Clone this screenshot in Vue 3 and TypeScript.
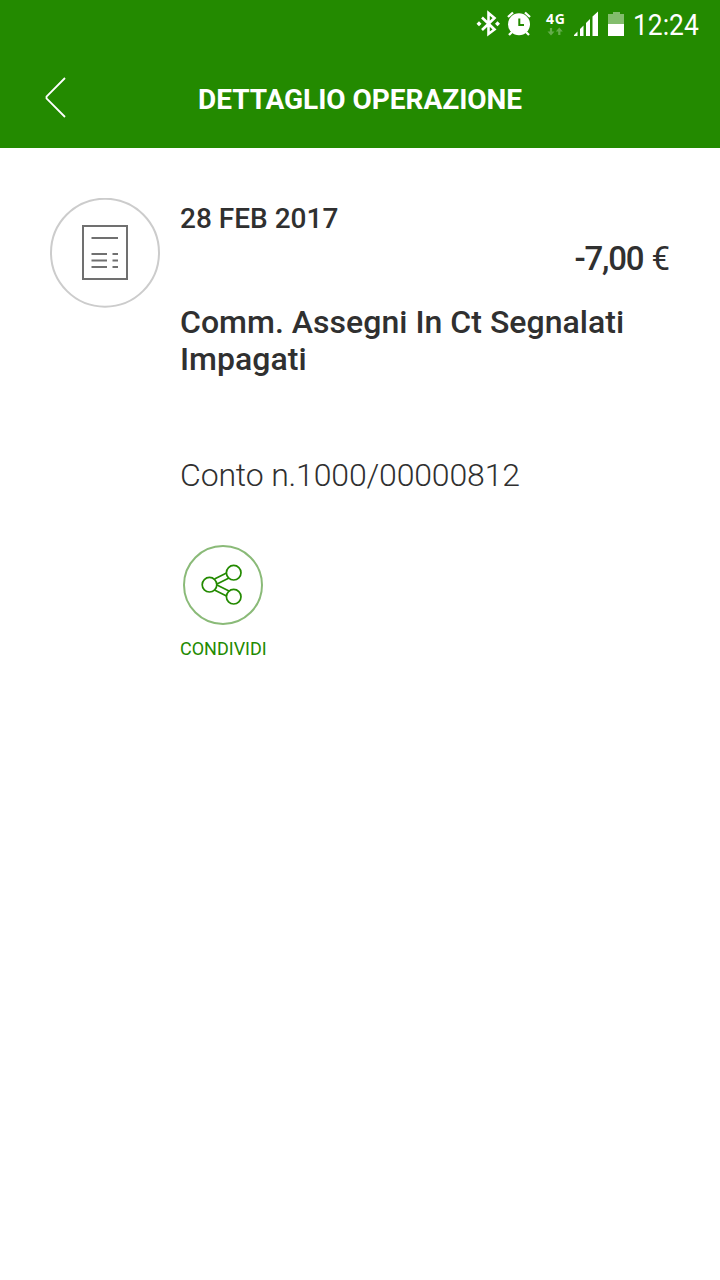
<script setup lang="ts">
const time = '12:24'
const operation = {
  date: '28 FEB 2017',
  amount: '-7,00',
  currency: '€',
  description: ['Comm. Assegni In Ct Segnalati', 'Impagati'],
  account: 'Conto n.1000/00000812',
}
</script>

<template>
  <div class="screen">
    <header class="top">
      <div class="status">
        <svg class="status-icons" width="160" height="50" viewBox="470 0 160 50" fill="none">
          <path d="M482 17.500 494.500 29.500 488.500 34V13l6 5-12.500 12" stroke="#fff" stroke-width="2.600" />
          <path d="m476.500 23.700 2.500-2.500 2.500 2.500-2.500 2.500zM495 23.700l2.500-2.500 2.500 2.500-2.500 2.500z" fill="#fff" />
          <circle cx="519" cy="24.300" r="11" fill="#fff" />
          <path d="m508 17 5-4.500M530 17l-5-4.500M512 32l-3 3M526 32l3 3" stroke="#fff" stroke-width="2.300" />
          <path d="M519.300 18.500V25H524" stroke="#238a00" stroke-width="2" />
          <path d="M551 28v6M559.300 35v-6" stroke="#65ad4c" stroke-width="2.200" />
          <path d="M547.500 31.500h7L551 35.500zM555.800 31.500h7L559.300 27.500z" fill="#65ad4c" />
          <path d="M574 36v-1l3.500-3.500V36zM580 36v-7l3.500-3.500V36zM586 36V23l4-4v17zM592.500 36V16.500L598 11.500V36z" fill="#fff" />
          <path d="M608 24V14h5v-2h7v2h4v10z" fill="#83bd6d" />
          <path d="M608 24h16v12h-16z" fill="#fff" />
        </svg>
        <span class="network">4G</span>
        <span class="time">{{ time }}</span>
      </div>
      <div class="bar">
        <svg class="back" width="24" height="42" viewBox="0 0 24 42" fill="none">
          <path d="M21 1 2.500 19.500v2L21 40" stroke="#fff" stroke-width="1.800" />
        </svg>
        <h1>DETTAGLIO OPERAZIONE</h1>
      </div>
    </header>
    <main>
      <svg class="kind" width="110" height="110" viewBox="0 0 110 110" fill="none">
        <circle cx="55" cy="54.700" r="54" stroke="#ccc" stroke-width="2" />
        <path d="M33 28h44v53H33z" stroke="#707070" stroke-width="2" />
        <path d="M41.500 40h26.500M41.500 56H57M62.500 56H68M41.500 62.500H57M62.500 62.500H68M41.500 69H57M62.500 69H68" stroke="#707070" stroke-width="1.900" />
      </svg>
      <section class="detail">
        <div class="date">{{ operation.date }}</div>
        <div class="amount"><b>{{ operation.amount }}</b> {{ operation.currency }}</div>
        <h2><span v-for="line in operation.description" :key="line">{{ line }}</span></h2>
        <div class="account">{{ operation.account }}</div>
        <button class="share" type="button">
          <svg width="80" height="80" viewBox="183 545 80 80" fill="none">
            <circle cx="223" cy="585" r="39" stroke="#8aba78" stroke-width="2" />
            <g stroke="#238a00" stroke-width="1.700">
              <path d="m214.500 579 12-6M217 584l12-6M217 585l12 6M214.500 590l12 6" />
              <circle cx="209.500" cy="584.700" r="7.300" />
              <circle cx="233.700" cy="572.700" r="7.300" />
              <circle cx="233.700" cy="596.700" r="7.300" />
            </g>
          </svg>
          <span>CONDIVIDI</span>
        </button>
      </section>
    </main>
  </div>
</template>

<style>
body {
  background: #fff;
}
</style>

<style scoped>
.screen {
  width: 720px;
  height: 1280px;
  overflow: hidden;
  background: #fff;
  color: #303030;
  font-family: Roboto, sans-serif;
}
.top {
  height: 148px;
  background: #238a00;
  color: #fff;
}
.status {
  position: relative;
  display: flex;
  height: 50px;
  padding-left: 470px;
}
.status-icons {
  flex: none;
}
.network {
  position: absolute;
  left: 546px;
  top: 11px;
  font: 700 14px/16px "Noto Sans", sans-serif;
  letter-spacing: 0.8px;
}
.time {
  margin-left: 3px;
  font-size: 30px;
  line-height: 50px;
  transform: scaleX(0.88);
  transform-origin: left;
}
.bar {
  display: grid;
  grid-template-columns: 100px 1fr 100px;
  align-items: start;
  height: 98px;
}
.back {
  margin: 27px 0 0 44px;
}
h1 {
  margin: 30px 0 0;
  font-size: 28px;
  line-height: 40px;
  font-weight: 700;
  letter-spacing: -0.04px;
  text-align: center;
  white-space: nowrap;
}
main {
  display: flex;
  gap: 20px;
  padding: 50px 50px 0;
}
.kind {
  flex: none;
}
.detail {
  flex: 1;
  min-width: 0;
  padding-top: 4px;
}
.date {
  font-size: 28px;
  line-height: 34px;
  font-weight: 500;
}
.amount {
  margin-top: 3px;
  font-size: 33px;
  line-height: 40px;
  text-align: right;
}
.amount b {
  font-weight: 500;
  letter-spacing: -1.2px;
}
h2 {
  margin: 25px 0 0;
  font-size: 32px;
  line-height: 37px;
  font-weight: 500;
  letter-spacing: 0.03px;
}
h2 span {
  display: block;
  white-space: nowrap;
}
.account {
  margin-top: 77px;
  font-size: 32px;
  line-height: 40px;
  font-weight: 300;
  letter-spacing: -0.15px;
}
.share {
  display: flex;
  flex-direction: column;
  align-items: flex-start;
  margin-top: 50px;
  padding: 0;
  border: 0;
  background: none;
  color: #238a00;
  font: 400 18px/22px Roboto, sans-serif;
}
.share svg {
  margin-left: 3px;
}
.share span {
  margin-top: 13px;
  white-space: nowrap;
}
</style>
